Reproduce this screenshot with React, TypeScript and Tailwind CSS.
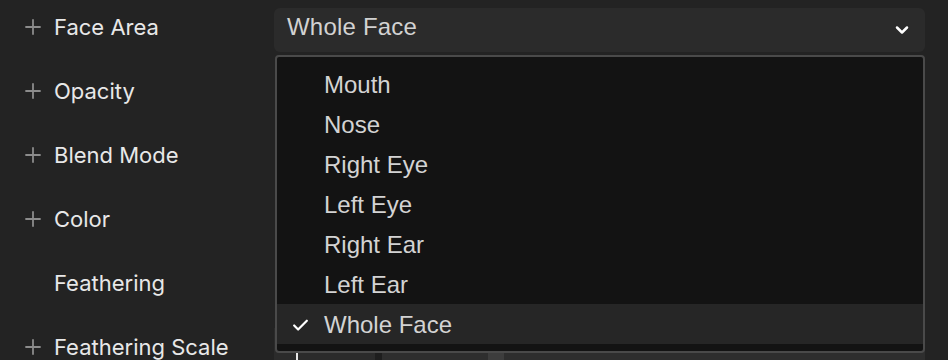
import { Check, ChevronDown, Plus } from "lucide-react";

const rows = [
  { label: "Face Area", plus: true },
  { label: "Opacity", plus: true },
  { label: "Blend Mode", plus: true },
  { label: "Color", plus: true },
  { label: "Feathering", plus: false },
  { label: "Feathering Scale", plus: true },
];

const options = ["Mouth", "Nose", "Right Eye", "Left Eye", "Right Ear", "Left Ear", "Whole Face"];

function FaceAreaSelect() {
  const selected = "Whole Face";
  return (
    <div className="relative mt-[13px] self-start w-full">
      <button className="flex h-[44px] w-full items-center justify-between rounded-[6px] bg-[#2b2b2b] pl-[13px] pr-[13px] text-[24px] text-[#d2d2d2] font-['Liberation_Sans',Arial,sans-serif]">
        <span className="pb-[7px] tracking-[0.2px]">{selected}</span>
        <ChevronDown size={20} strokeWidth={3} className="text-white" />
      </button>

      <div className="absolute left-[1px] right-0 top-[47px] z-10 rounded-[4px] border-2 border-[#4a4a4a] bg-[#131313] py-[7px] font-['Liberation_Sans',Arial,sans-serif]">
        {options.map((o) => (
          <div
            key={o}
            className={`flex h-[40px] items-center pt-[2px] text-[24px] text-[#d3d3d3] ${o === selected ? "bg-[#262626]" : ""}`}
          >
            <div className="flex w-[47px] justify-end pr-[14px]">
              {o === selected && <Check size={19} strokeWidth={2.8} className="text-white" />}
            </div>
            <span>{o}</span>
          </div>
        ))}
      </div>
    </div>
  );
}

function ScaleControl() {
  return (
    <div className="mt-[13px] flex h-[44px] w-full self-start">
      <div className="flex w-[101px] items-end bg-[#2b2b2b] pl-[22px]">
        <div className="h-[20px] w-[2px] bg-[#e6e6e6]" />
      </div>
      <div className="w-[7px] bg-[#1e1e1e]" />
      <div className="flex flex-1 bg-[#2e2e2e]">
        <div className="w-[106px]" />
        <div className="w-[16px] bg-[#3d3d3d]" />
      </div>
    </div>
  );
}

export default function App() {
  return (
    <div className="h-[360px] w-[948px] overflow-hidden bg-[#232323]">
      <div className="-mt-[5px] flex flex-col">
        {rows.map((r, i) => (
          <div key={r.label} className="flex h-[64px] items-center">
            <div className="flex w-[274px] items-center font-['Inter',sans-serif] text-[22px] text-[#e8e8e8]">
              <div className="flex w-[54px] justify-center pl-[12px]">
                {r.plus && <Plus size={24} strokeWidth={1.8} className="text-[#8c8c8c]" />}
              </div>
              <span>{r.label}</span>
            </div>
            <div className="mr-[23px] flex flex-1 self-stretch">
              {i === 0 && <FaceAreaSelect />}
              {i === 5 && <ScaleControl />}
            </div>
          </div>
        ))}
      </div>
    </div>
  );
}
